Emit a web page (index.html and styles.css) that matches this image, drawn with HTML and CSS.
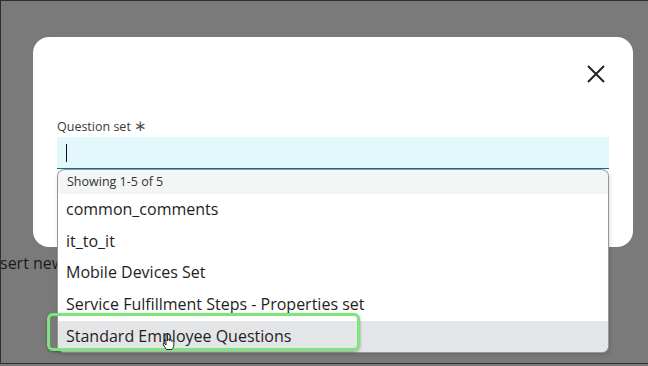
FILE: index.html
```html
<!DOCTYPE html>
<html lang="en">
<head>
<meta charset="utf-8"/>
<title>Question set</title>
<link rel="stylesheet" href="styles.css">
</head>
<body>
<div class="screen">
  <div class="modal">
    <div class="modal-head">
      <button class="close-btn" aria-label="Close">
        <svg width="18" height="18" viewBox="0 0 18 18"><path d="M1 1 L17 17 M17 1 L1 17" stroke="#222" stroke-width="2" fill="none"/></svg>
      </button>
    </div>
    <div class="field">
      <label class="field-label">Question set <span class="req">&#x2217;</span></label>
      <div class="input"><span class="caret"></span></div>
      <div class="dropdown">
        <div class="dropdown-count">Showing 1-5 of 5</div>
        <div class="option">common_comments</div>
        <div class="option">it_to_it</div>
        <div class="option">Mobile Devices Set</div>
        <div class="option">Service Fulfillment Steps - Properties set</div>
        <div class="option hover">Standard Employee Questions</div>
      </div>
      <div class="callout"></div>
      <svg class="pointer" width="14" height="18" viewBox="0 0 14 18"><path d="M4 1.5 C4 0.8 5.5 0.8 5.5 1.5 L5.5 8 L6 6.5 C6.3 5.8 7.5 5.8 7.6 6.6 L7.7 8 L8.2 7 C8.5 6.4 9.7 6.5 9.7 7.3 L9.8 8.5 L10.3 8 C10.7 7.6 11.8 7.8 11.8 8.6 L11.8 12 C11.8 14 10.8 15.5 10 16.5 L4.5 16.5 C3.8 15.3 2.5 13.5 1.5 12 C0.8 11 1.6 10 2.5 10.6 L4 12 Z" fill="#fff" stroke="#111" stroke-width="0.9"/></svg>
    </div>
  </div>
  <div class="behind">sert new</div>
</div>
</body>
</html>
```

FILE: styles.css
```css
body { margin: 0; background: #797979; font-family: "Open Sans", "Noto Sans", sans-serif; }
.screen { width: 647px; height: 362px; border-top: 1px solid #2e2e2e; border-left: 1px solid #2e2e2e; border-bottom: 1px solid #2e2e2e; background: #7a7a7a; overflow: hidden; }
.modal { margin: 36px 0 0 32px; width: 600px; height: 210px; background: #fff; border-radius: 16px; }
.modal-head { display: flex; justify-content: flex-end; padding: 28px 28px 0 0; height: 20px; }
.close-btn { background: none; border: none; padding: 0; width: 18px; height: 18px; cursor: pointer; }
.field { position: relative; margin: 34px 0 0 24px; width: 552px; }
.field-label { display: block; font-size: 12.5px; color: #3a3a3a; line-height: 16px; }
.req { font-size: 15px; color: #555; font-weight: 300; line-height: 10px; }
.input { margin-top: 2px; height: 31px; background: #e2f8fd; border-bottom: 1px solid #1d6c83; display: flex; align-items: center; padding-left: 9px; }
.caret { width: 1px; height: 18px; background: #111; }
.dropdown { position: absolute; top: 50px; left: 0; width: 550px; background: #fff; border: 1px solid #8e9a9d; border-top: none; border-radius: 7px; overflow: hidden; z-index: 2; box-shadow: 1px 2px 4px rgba(0,0,0,0.15); }
.dropdown-count { height: 24px; line-height: 24px; background: #f4f5f5; font-size: 12.5px; color: #333; padding-left: 9px; border-top: 1px solid #8e9a9d; border-top-left-radius: 7px; border-top-right-radius: 7px; }
.option { height: 31.7px; line-height: 31.7px; font-size: 16px; color: #1e1e1e; padding-left: 8px; white-space: nowrap; }
.option.hover { background: #e4e5e7; }
.callout { position: absolute; left: -10px; top: 194px; width: 307px; height: 32px; border: 3px solid #7ee57c; border-radius: 6px; z-index: 3; box-shadow: 0 1px 3px rgba(0,0,0,0.35); }
.pointer { position: absolute; left: 105px; top: 214px; z-index: 4; }
.behind { margin-top: 5px; margin-left: -1px; font-size: 16px; color: #1a1a1a; }
```
